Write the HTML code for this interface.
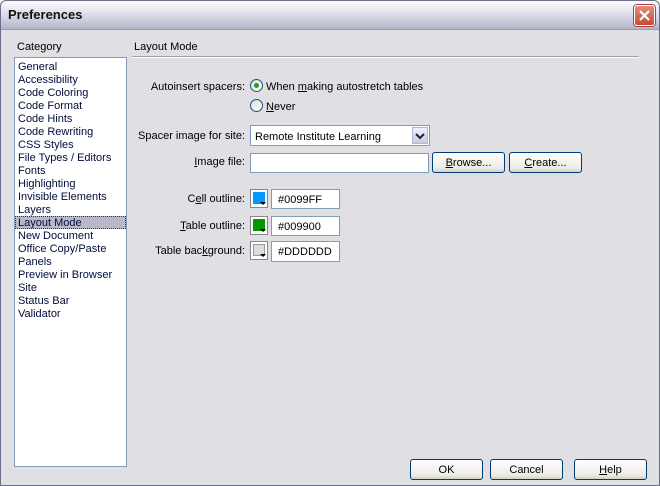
<!DOCTYPE html>
<html><head><style>
*{margin:0;padding:0;box-sizing:border-box}
body{width:660px;height:486px;background:#fff;font-family:Tahoma,"Liberation Sans",sans-serif;font-size:11px;color:#000;position:relative;overflow:hidden}
.win{position:absolute;left:0;top:0;width:660px;height:486px;background:#e0dfe3;border-radius:6px 6px 0 0}
.frame{position:absolute;left:0;top:0;width:660px;height:486px;border:1px solid #6f6e8a;border-radius:6px 6px 0 0}
.title{position:absolute;left:0;top:0;width:660px;height:30px;background:linear-gradient(#fdfdfe,#e4e4ee 40%,#c4c4d6 80%,#b4b4c8);border-radius:6px 6px 0 0;border-bottom:1px solid #9a9ab0}
.title span{position:absolute;left:8px;top:7px;font-size:13px;font-weight:bold;color:#111}
.close{position:absolute;left:634px;top:5px;width:21px;height:21px;border-radius:3px;background:linear-gradient(#e88a7a,#c94a38);border:1px solid #fff;box-shadow:0 0 0 1px #a44}
.abs{position:absolute;white-space:nowrap}
.list{position:absolute;left:14px;top:57px;width:113px;height:410px;background:#fff;border:1px solid #7f9db9}
.list div{height:13px;line-height:13px;padding-left:3px;padding-top:1px;color:#000d3a}
.sel{background:#b8b8c8;outline:1px dotted #333;outline-offset:-1px}
.lbl{position:absolute;text-align:right;width:200px;left:45px;white-space:nowrap}
.input{position:absolute;background:#fff;border:1px solid #7f9db9}
.btn{position:absolute;border:1px solid #003c74;border-radius:3px;background:linear-gradient(#fff,#ecebe6 80%,#d6d0c5);text-align:center;line-height:21px}
.radio{position:absolute;width:13px;height:13px;border-radius:50%;border:1px solid #1c5180;background:linear-gradient(135deg,#dcdcd6,#fff)}
.sw{position:absolute;width:18px;height:19px;border:1px solid #888;background:#fff}
.sw i{position:absolute;left:2px;top:2px;width:12px;height:12px}
.sw b{position:absolute;right:1px;bottom:2px;width:0;height:0;border-left:3px solid transparent;border-right:3px solid transparent;border-top:3px solid #000}
u{text-decoration:underline}
</style></head><body>
<div class="win">
<div class="title"><span>Preferences</span>
<div class="close"><svg width="19" height="19" viewBox="0 0 19 19"><path d="M5 5L14 14M14 5L5 14" stroke="#fff" stroke-width="2.2"/></svg></div></div>
<div class="abs" style="left:17px;top:41px">Category</div>
<div class="abs" style="left:134px;top:41px">Layout Mode</div>
<div class="abs" style="left:132px;top:56px;width:507px;height:2px;border-top:1px solid #a0a0a8;border-bottom:1px solid #fff"></div>
<div class="list">
<div style="margin-top:2px">General</div><div>Accessibility</div><div>Code Coloring</div><div>Code Format</div><div>Code Hints</div><div>Code Rewriting</div><div>CSS Styles</div><div>File Types / Editors</div><div>Fonts</div><div>Highlighting</div><div>Invisible Elements</div><div>Layers</div><div class="sel">Layout Mode</div><div>New Document</div><div>Office Copy/Paste</div><div>Panels</div><div>Preview in Browser</div><div>Site</div><div>Status Bar</div><div>Validator</div>
</div>
<div class="lbl" style="top:81px">Autoinsert spacers:</div>
<div class="radio" style="left:250px;top:79px"><div style="position:absolute;left:3px;top:3px;width:5px;height:5px;border-radius:50%;background:#21a121"></div></div>
<div class="abs" style="left:266px;top:81px">When <u>m</u>aking autostretch tables</div>
<div class="radio" style="left:250px;top:99px"></div>
<div class="abs" style="left:266px;top:101px"><u>N</u>ever</div>
<div class="lbl" style="top:130px">Spacer image for site:</div>
<div class="input" style="left:250px;top:125px;width:180px;height:21px"><span class="abs" style="left:4px;top:5px">Remote Institute Learning</span>
<div style="position:absolute;right:1px;top:1px;width:16px;height:17px;background:linear-gradient(#eef,#c8cce0);border:1px solid #b0b8d0"><svg width="14" height="15"><path d="M3 6L7 10L11 6" stroke="#222" stroke-width="2" fill="none"/></svg></div></div>
<div class="lbl" style="top:156px"><u>I</u>mage file:</div>
<div class="input" style="left:250px;top:153px;width:179px;height:20px"></div>
<div class="btn" style="left:432px;top:152px;width:73px;height:21px"><u>B</u>rowse...</div>
<div class="btn" style="left:509px;top:152px;width:73px;height:21px"><u>C</u>reate...</div>
<div class="lbl" style="top:193px">C<u>e</u>ll outline:</div>
<div class="sw" style="left:250px;top:189px"><i style="background:#0099ff"></i><b></b></div>
<div class="input" style="left:271px;top:189px;width:69px;height:20px"><span class="abs" style="left:6px;top:4px">#0099FF</span></div>
<div class="lbl" style="top:220px"><u>T</u>able outline:</div>
<div class="sw" style="left:250px;top:216px"><i style="background:#009900"></i><b></b></div>
<div class="input" style="left:271px;top:216px;width:69px;height:20px"><span class="abs" style="left:6px;top:4px">#009900</span></div>
<div class="lbl" style="top:245px">Table bac<u>k</u>ground:</div>
<div class="sw" style="left:250px;top:241px"><i style="background:#dddddd;border:1px solid #999"></i><b></b></div>
<div class="input" style="left:271px;top:241px;width:69px;height:21px"><span class="abs" style="left:6px;top:4px">#DDDDDD</span></div>
<div class="btn" style="left:410px;top:459px;width:73px;height:21px">OK</div>
<div class="btn" style="left:490px;top:459px;width:73px;height:21px">Cancel</div>
<div class="btn" style="left:574px;top:459px;width:73px;height:21px"><u>H</u>elp</div>
</div>
<div class="frame"></div>
</body></html>
